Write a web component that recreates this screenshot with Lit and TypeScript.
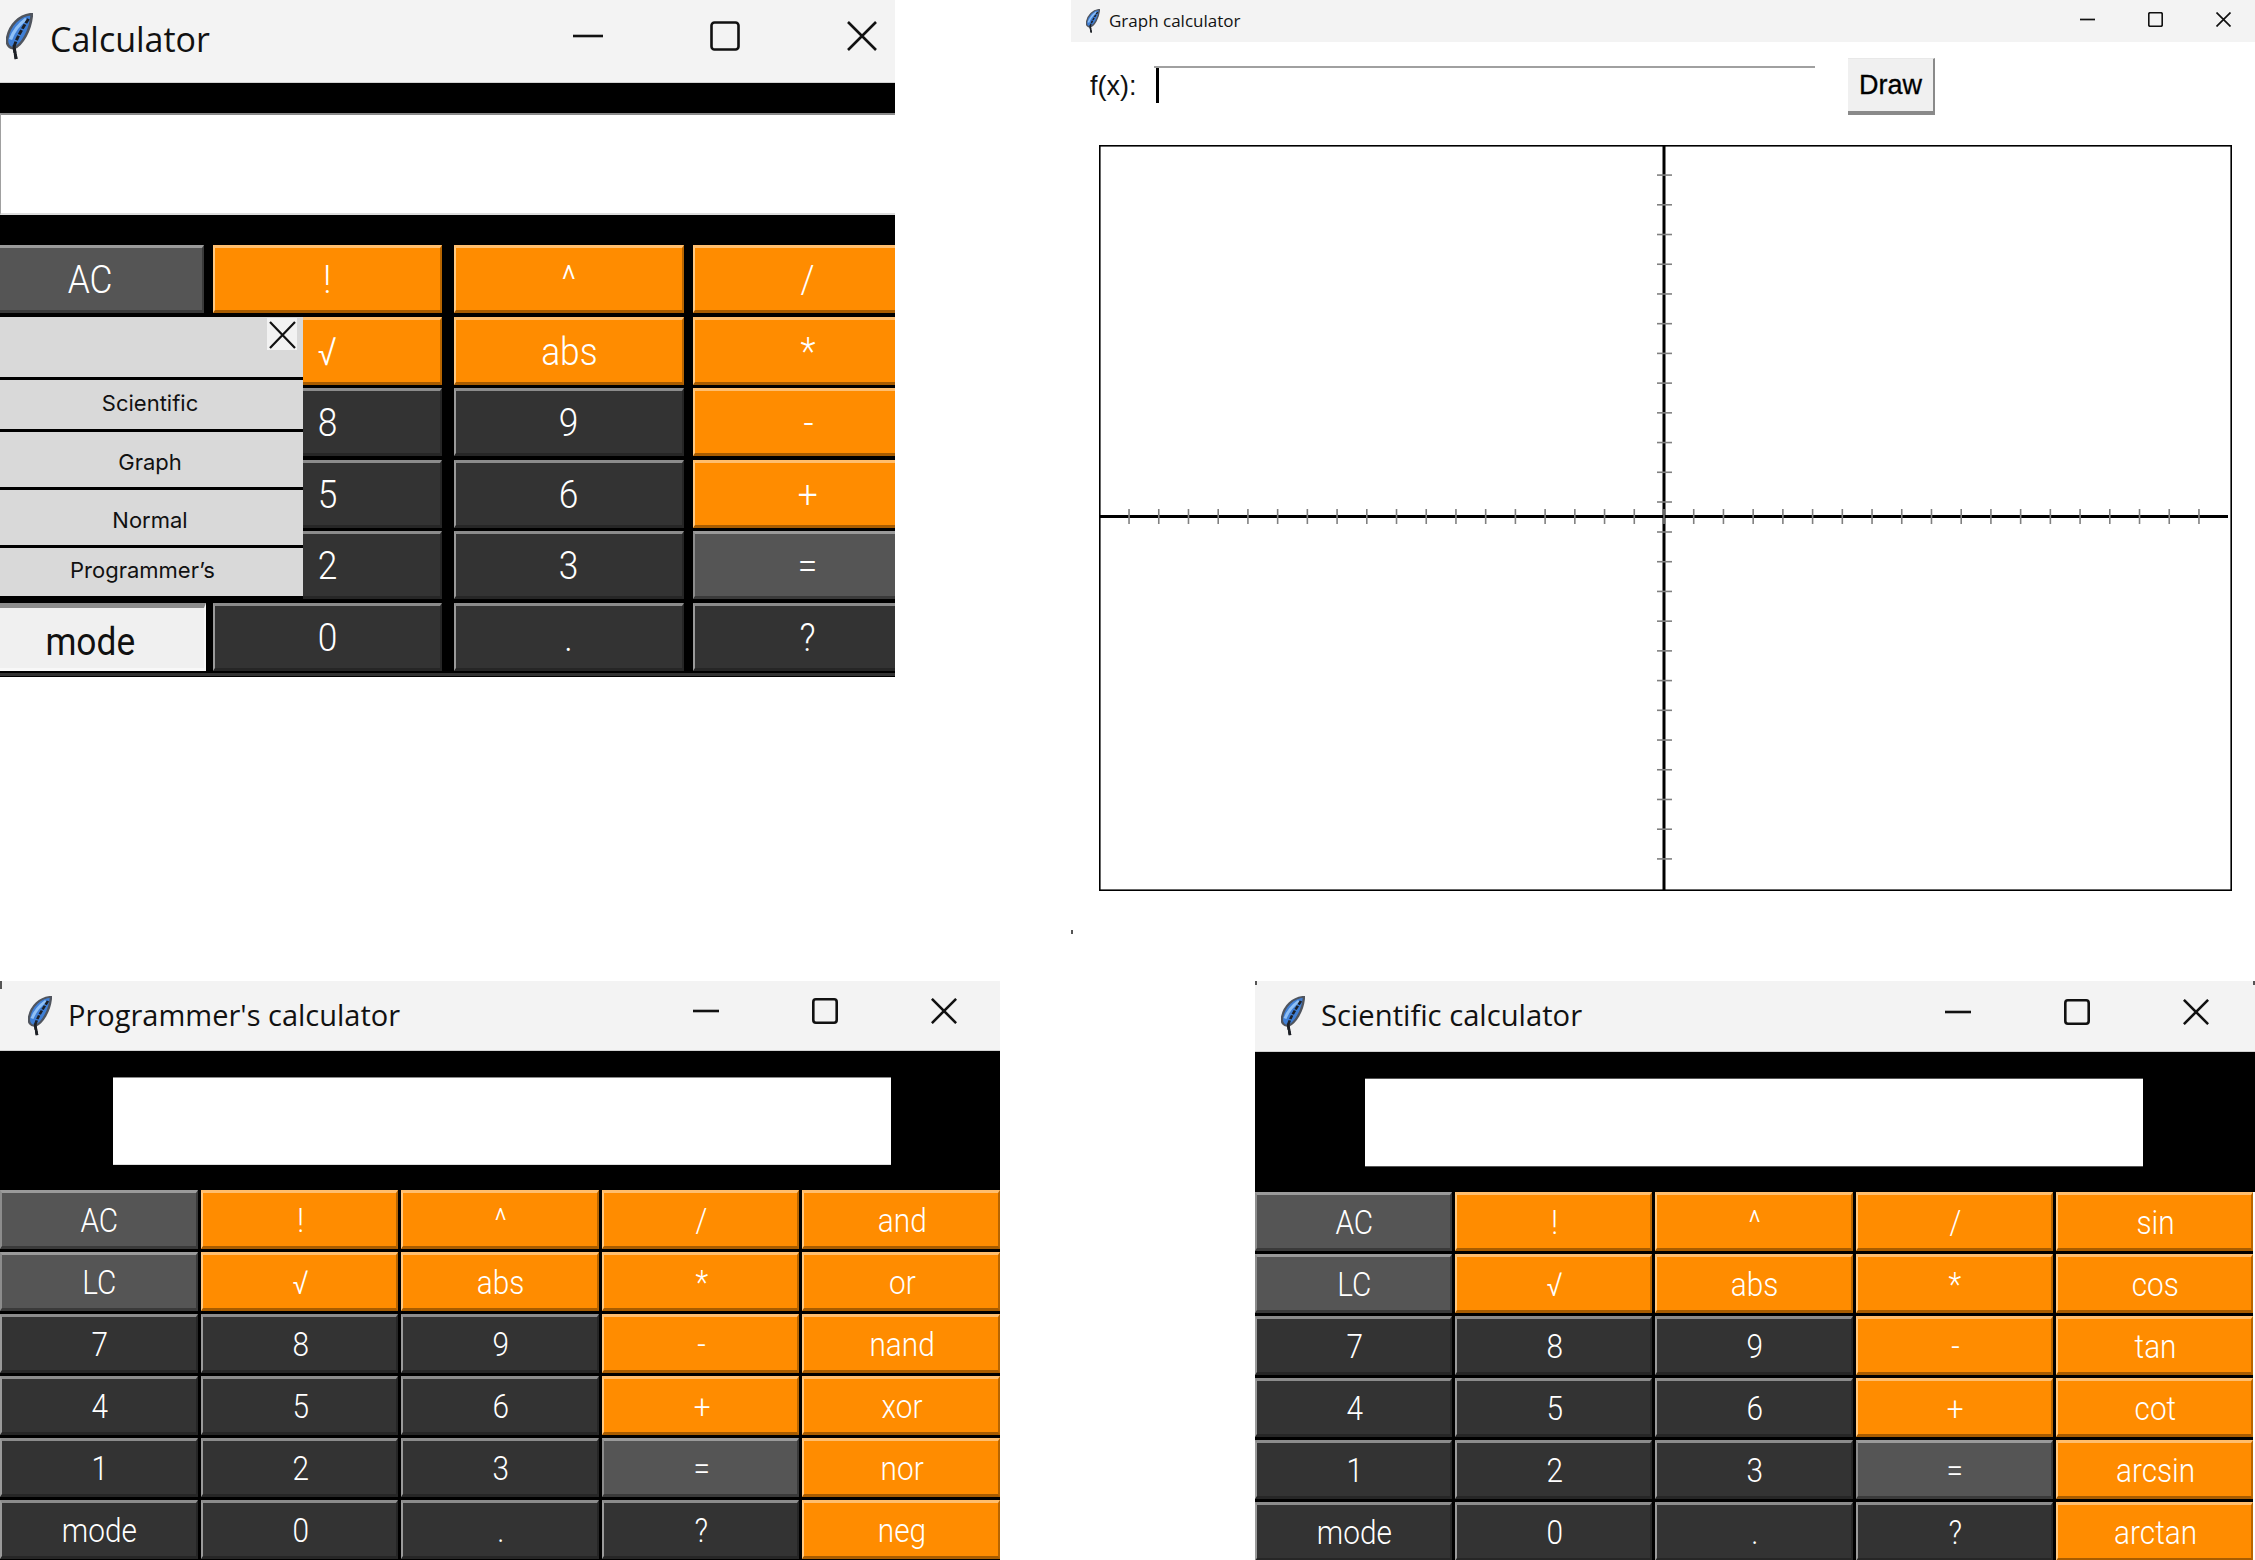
import { LitElement, html, css, svg } from "lit";
import { customElement } from "lit/decorators.js";

type Key = [string, string];
const base: string[][] = [
  ["AC:g", "!:o", "^:o", "/:o"],
  ["LC:g", "√:o", "abs:o", "*:o"],
  ["7:d", "8:d", "9:d", "-:o"],
  ["4:d", "5:d", "6:d", "+:o"],
  ["1:d", "2:d", "3:d", "=:g"],
  ["mode:d", "0:d", ".:d", "?:d"],
];
const keys = (extra: string[], modeKind = "d"): Key[] =>
  base.flatMap((r, i) => {
    const row = extra.length ? [...r, extra[i] + ":o"] : r;
    return row.map((c) => {
      const k = c.lastIndexOf(":");
      const label = c.slice(0, k);
      return [label, label === "mode" ? modeKind : c.slice(k + 1)] as Key;
    });
  });

/* The normal calculator's mode menu covers these keys entirely, so they carry no visible text. */
const covered = new Set(["LC", "7", "4", "1"]);
const normalKeys = (): Key[] =>
  keys([], "m").map(([t, k]) => [covered.has(t) ? "" : t, k] as Key);

const feather = (w: number, h: number) => html`<svg class="feather" style="width:${w}px;height:${h}px" viewBox="0 0 24 48" preserveAspectRatio="none">
  <path d="M23 1C12 2 3 12 1 26C0 32 3 36 7 36C14 33 22 18 23 1Z" fill="#3f7fd6" stroke="#50555e" stroke-width="2.4"/>
  <path d="M18 6C12 11 7 18 4 27" fill="none" stroke="#8fc0f6" stroke-width="3"/>
  <path d="M20 6C15 15 10 24 7 35L9 47" fill="none" stroke="#1d2026" stroke-width="2.6" stroke-dasharray="5 1.5"/>
  <path d="M7 33L9 47" fill="none" stroke="#1d2026" stroke-width="2.6"/>
</svg>`;

const controls = (c: { s: number; g: number; r: number; sw: number; t: number }) => html`<div class="ctl" style="gap:${c.g}px;margin-right:${c.r}px;margin-top:${c.t}px">
  <svg style="width:${c.s}px;height:${c.s}px" viewBox="0 0 30 30"><path d="M0 15H30" stroke="#111" stroke-width="${c.sw}"/></svg>
  <svg style="width:${c.s}px;height:${c.s}px" viewBox="0 0 30 30"><rect x="1.5" y="1.5" width="27" height="27" rx="3" fill="none" stroke="#111" stroke-width="${c.sw}"/></svg>
  <svg style="width:${c.s}px;height:${c.s}px" viewBox="0 0 30 30"><path d="M1 1L29 29M29 1L1 29" fill="none" stroke="#111" stroke-width="${c.sw}"/></svg>
</div>`;

const xTicks = Array.from({ length: 37 }, (_, i) => 565 + (i - 18) * 29.72);
const yTicks = [
  ...Array.from({ length: 12 }, (_, i) => 357 - i * 29.72),
  ...Array.from({ length: 12 }, (_, i) => 387 + i * 29.72),
];

@customElement("app-root")
export class AppRoot extends LitElement {
  static styles = css`
    :host { display: block; position: relative; width: 2255px; height: 1560px; overflow: hidden; background: #fff; font-family: "Liberation Sans", Arial, sans-serif; }
    .win { position: absolute; overflow: hidden; background: #000; }
    .title { display: flex; align-items: center; background: #f3f3f3; box-sizing: border-box; border-bottom: 1px solid #d2d2d2; font-family: "Open Sans", sans-serif; color: #111; }
    .title .name { white-space: nowrap; }
    .feather { flex: none; display: block; }
    .ctl { margin-left: auto; display: flex; align-items: center; }
    .ctl svg { display: block; flex: none; }

    .w1 .title { height: 83px; padding-left: 6px; }
    .w1 .feather { margin-top: -9px; }
    .w1 .name { font-size: 34px; margin-left: 17px; margin-top: -5px; }
    .w3 .title { height: 70px; padding-left: 28px; }
    .w3 .name { font-size: 29px; margin-left: 16px; margin-top: -3px; }
    .w4 .title { height: 71px; padding-left: 26px; }
    .w4 .name { font-size: 29.2px; margin-left: 16px; margin-top: -2px; }

    .disp { background: #fff; box-sizing: border-box; }
    .w1 .disp { height: 102px; margin: 30px 0; border-top: 2px solid #8a8a8a; border-left: 1px solid #a0a0a0; border-bottom: 2px solid #ddd; }
    .w3 .disp { width: 778px; height: 88px; margin: 26px 0 25px 113px; border-top: 1px solid #8a8a8a; border-bottom: 1px solid #ddd; }
    .w4 .disp { width: 778px; height: 89px; margin: 26px 0 25px 110px; border-top: 1px solid #555; border-bottom: 1px solid #555; }

    .pad { display: grid; }
    .w1 .pad { width: 947px; margin-left: -24px; grid-template-columns: 228px 229px 233px 230px; grid-auto-rows: 68px; column-gap: 9px; row-gap: 3.6px; }
    .w1 .pad .btn:nth-child(4n + 3) { margin-left: 3px; }
    .w3 .pad { grid-template-columns: repeat(5, 1fr); grid-auto-rows: 59px; gap: 3px; width: 1000px; }
    .w4 .pad { grid-template-columns: repeat(5, 1fr); grid-auto-rows: 59px; gap: 3px; width: 998px; }
    .edge { position: absolute; right: 0; top: 211px; width: 2px; bottom: 0; background: #fff; }

    .btn { display: flex; align-items: center; justify-content: center; box-sizing: border-box; border-style: solid; border-width: 3px 2px 3px 2px; color: #fff; min-width: 0; overflow: hidden; line-height: 1; padding-top: 2px; font-family: Roboto, "Liberation Sans", sans-serif; font-weight: 300; }
    .w1 .btn { font-size: 38px; }
    .w3 .btn, .w4 .btn { font-size: 32px; padding-left: 2px; }
    .btn span { display: inline-block; transform: scale(0.93, 1.03); white-space: nowrap; }
    .btn.d { background: #333; border-color: #8c8c8c #262626 #262626 #9a9a9a; }
    .btn.g { background: #555; border-color: #9a9a9a #3a3a3a #3a3a3a #8c8c8c; }
    .btn.o { background: #ff8c00; border-color: #ffbe6e #b86500 #a85c00 #ffc880; }
    .w1 .btn.m { background: #f0f0f0; color: #111; font-weight: 400; padding: 8px 2px 0 0; margin-right: -2px; border-color: #8c8c8c #f8f8f8 #f8f8f8 #f8f8f8; border-width: 5px 2px 3px 2px; }
    .foot { height: 3px; margin-top: 2px; background: #333; }

    .menu { position: absolute; left: 0; top: 317px; width: 303px; height: 282px; background: #d9d9d9; display: flex; flex-direction: column; font-family: Inter, "Liberation Sans", sans-serif; font-size: 22px; color: #111; }
    .mi { display: flex; align-items: center; justify-content: center; box-sizing: border-box; border-bottom: 3px solid #000; }
    .mi:last-child { border-bottom: 0; }
    .m0 { height: 63px; }
    .m1 { height: 52px; padding: 0 3px 4px 0; }
    .m2 { height: 58px; padding: 4px 3px 0 0; }
    .m3 { height: 58px; padding: 4px 3px 0 0; }
    .m4 { height: 51px; padding-right: 18px; padding-bottom: 5px; }
    .mx { position: absolute; left: 267px; top: 1px; width: 30px; height: 32px; background: #f2f2f2; }
    .mx svg { display: block; width: 30px; height: 32px; }

    .w2 { background: #fff; }
    .w2 .title { height: 42px; padding-left: 15px; border-bottom: 0; }
    .w2 .name { font-size: 17px; margin-left: 9px; margin-top: -2px; }
    .entry { display: flex; align-items: flex-start; height: 57px; margin-top: 16px; padding-left: 19px; }
    .lbl { font-size: 27px; width: 64px; margin-top: 12px; color: #111; line-height: 32px; }
    .field { position: relative; box-sizing: border-box; width: 661px; height: 44px; margin-top: 8px; border-top: 2px solid #a0a0a0; }
    .caret { width: 3px; height: 35px; margin-left: 2px; background: #000; }
    .draw { box-sizing: border-box; margin-left: 33px; width: 87px; height: 57px; background: #f0f0f0; border-right: 2px solid #8a8a8a; border-bottom: 4px solid #8a8a8a; border-top: 1px solid #e8e8e8; font-size: 27px; display: flex; align-items: center; justify-content: center; color: #000; -webkit-text-stroke: 0.3px #000; }
    .plot { display: block; width: 1133px; height: 746px; margin: 30px 0 0 28px; }
    .nick { position: absolute; width: 2px; height: 4px; background: #555; }
  `;

  private pad(list: Key[]) {
    return html`<div class="pad">${list.map(([t, k]) => html`<div class="btn ${k}"><span>${t}</span></div>`)}</div>`;
  }

  private plot() {
    return html`<svg class="plot" viewBox="0 0 1133 746">
      <rect x="0.8" y="0.8" width="1131.4" height="744.4" fill="#fff" stroke="#000" stroke-width="1.6"/>
      ${svg`<path d="M565 0V746" stroke="#000" stroke-width="3"/><path d="M0 371.5H1129" stroke="#000" stroke-width="3"/>`}
      ${xTicks.map((x) => svg`<path d="M${x} 364V379" stroke="#808080" stroke-width="1.6"/>`)}
      ${yTicks.map((y) => svg`<path d="M558 ${y}H573" stroke="#808080" stroke-width="1.6"/>`)}
    </svg>`;
  }

  render() {
    return html`
      <div class="win w1" style="left:0;top:0;width:895px;height:677px">
        <div class="title">${feather(27, 47)}<span class="name">Calculator</span>${controls({ s: 30, g: 107, r: 18, sw: 2.6, t: -10 })}</div>
        <div class="disp"></div>
        ${this.pad(normalKeys())}
        <div class="foot"></div>
        <div class="menu">
          <div class="mi m0"></div>
          <div class="mi m1">Scientific</div>
          <div class="mi m2">Graph</div>
          <div class="mi m3">Normal</div>
          <div class="mi m4">Programmer’s</div>
          <div class="mx"><svg viewBox="0 0 30 32"><path d="M3 4L28 30M28 4L3 30" stroke="#111" stroke-width="2.2" fill="none"/></svg></div>
        </div>
      </div>

      <div class="win w2" style="left:1071px;top:0;width:1184px;height:900px">
        <div class="title">${feather(14, 24)}<span class="name">Graph calculator</span>${controls({ s: 15, g: 53, r: 24, sw: 3.4, t: -3 })}</div>
        <div class="entry">
          <div class="lbl">f(x):</div>
          <div class="field"><div class="caret"></div></div>
          <div class="draw">Draw</div>
        </div>
        ${this.plot()}
      </div>

      <div class="win w3" style="left:0;top:981px;width:1000px;height:579px">
        <div class="title">${feather(24, 40)}<span class="name">Programmer's calculator</span>${controls({ s: 26, g: 93, r: 43, sw: 3, t: -9 })}</div>
        <div class="disp"></div>
        ${this.pad(keys(["and", "or", "nand", "xor", "nor", "neg"]))}
      </div>

      <div class="win w4" style="left:1255px;top:981px;width:1000px;height:579px">
        <div class="title">${feather(24, 40)}<span class="name">Scientific calculator</span>${controls({ s: 26, g: 93, r: 46, sw: 3, t: -9 })}</div>
        <div class="disp"></div>
        ${this.pad(keys(["sin", "cos", "tan", "cot", "arcsin", "arctan"]))}
        <div class="edge"></div>
      </div>

      <div class="nick" style="left:1071px;top:930px"></div>
      <div class="nick" style="left:0;top:981px;height:8px"></div>
      <div class="nick" style="left:1255px;top:981px"></div>
      <div class="nick" style="left:2253px;top:981px"></div>
    `;
  }
}
